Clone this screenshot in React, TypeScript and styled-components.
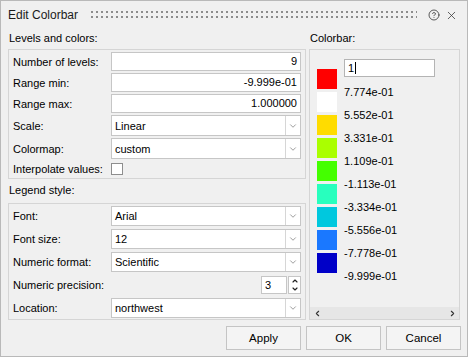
import styled, { createGlobalStyle } from "styled-components";
import { ChevronDown, ChevronLeft, ChevronRight, ChevronUp, CircleHelp, X } from "lucide-react";

const GlobalStyle = createGlobalStyle`
  body {
    margin: 0;
    background: #f0f0f0;
  }
  * {
    box-sizing: border-box;
  }
`;

const Dialog = styled.div`
  width: 468px;
  height: 357px;
  border: 1px solid #b9b9b9;
  background: #f0f0f0;
  display: flex;
  flex-direction: column;
  font-family: "Liberation Sans", Arial, sans-serif;
  font-size: 11px;
  color: #000;
`;

const TitleBar = styled.div`
  height: 28px;
  display: flex;
  align-items: center;
  padding: 0 9px 0 7px;
`;

const TitleText = styled.div`
  font-size: 12px;
  color: #1a1a1a;
`;

const Grip = styled.div`
  flex: 1;
  height: 10px;
  margin: 2px 11px 0 13px;
  background-image: radial-gradient(circle at 1px 1px, #8c8c8c 0.9px, transparent 1.2px);
  background-size: 5px 5px;
`;

const TitleIcons = styled.div`
  display: flex;
  align-items: center;
  gap: 5px;
  color: #333;
`;

const Body = styled.div`
  display: flex;
  padding: 0 7px 0 7px;
  gap: 3px;
`;

const LeftColumn = styled.div`
  width: 298px;
  display: flex;
  flex-direction: column;
`;

const RightColumn = styled.div`
  flex: 1;
  display: flex;
  flex-direction: column;
`;

const SectionLabel = styled.div<{ $h: number }>`
  height: ${(p) => p.$h}px;
  line-height: ${(p) => p.$h - 2}px;
  padding-left: 1px;
`;

const Group = styled.div<{ $gap: number; $pt: number }>`
  border: 1px solid #d5d5d5;
  padding: ${(p) => p.$pt}px 4px 1px 4px;
  display: flex;
  flex-direction: column;
  gap: ${(p) => p.$gap}px;
`;

const Row = styled.div<{ $h: number }>`
  display: grid;
  grid-template-columns: 98px 1fr;
  align-items: center;
  height: ${(p) => p.$h}px;
`;

const TextField = styled.div`
  height: 19px;
  border: 1px solid #c6c6c6;
  background: #fff;
  text-align: right;
  padding-right: 3px;
  line-height: 17px;
`;

const Combo = styled.div<{ $h: number }>`
  height: ${(p) => p.$h}px;
  display: flex;
  border: 1px solid #c6c6c6;
  background: #fff;
`;

const ComboText = styled.div`
  flex: 1;
  padding-left: 3px;
  display: flex;
  align-items: center;
`;

const ComboArrow = styled.div`
  width: 15px;
  border-left: 1px solid #d6d6d6;
  display: flex;
  align-items: center;
  justify-content: center;
  color: #8a8a8a;
`;

const Checkbox = styled.div`
  width: 12px;
  height: 12px;
  border: 1px solid #8e8e8e;
  background: #fff;
`;

const SpinWrap = styled.div`
  display: flex;
  justify-content: flex-end;
  height: 18px;
`;

const SpinField = styled.div`
  width: 26px;
  border: 1px solid #c6c6c6;
  background: #fff;
  padding-left: 3px;
  line-height: 16px;
`;

const SpinButtons = styled.div`
  width: 13px;
  margin-left: 1px;
  border: 1px solid #c6c6c6;
  background: #fff;
  display: flex;
  flex-direction: column;
  align-items: center;
  justify-content: center;
  color: #222;
  line-height: 0;
`;

const Panel = styled.div`
  flex: 1;
  border: 1px solid #d5d5d5;
  display: flex;
  flex-direction: column;
`;

const PanelContent = styled.div`
  flex: 1;
  display: flex;
  padding-left: 7px;
`;

const Swatches = styled.div`
  margin-top: 19px;
  display: flex;
  flex-direction: column;
  gap: 3px;
`;

const Swatch = styled.div<{ $color: string }>`
  width: 20px;
  height: 20px;
  background: ${(p) => p.$color};
`;

const Values = styled.div`
  margin-top: 9px;
  margin-left: 7px;
  display: flex;
  flex-direction: column;
`;

const ValueInput = styled.div`
  width: 91px;
  height: 18px;
  border: 1px solid #b4b4b4;
  background: #fff;
  padding-left: 3px;
  display: flex;
  align-items: center;
  margin-bottom: 4px;
`;

const Caret = styled.span`
  display: inline-block;
  width: 1px;
  height: 12px;
  background: #000;
  margin-left: 1px;
`;

const ValueLabel = styled.div`
  height: 23px;
  line-height: 23px;
`;

const ScrollBar = styled.div`
  height: 12px;
  background: #e6e6e6;
  display: flex;
  justify-content: space-between;
  align-items: center;
  padding: 0 2px 0 3px;
  color: #333;
`;

const Footer = styled.div`
  display: flex;
  justify-content: flex-end;
  gap: 5px;
  padding: 6px 6px 0 0;
`;

const Button = styled.button`
  width: 75px;
  height: 24px;
  border: 1px solid #c4c4c4;
  background: #f4f4f4;
  font-family: "Liberation Sans", Arial, sans-serif;
  font-size: 11.5px;
  color: #000;
  padding: 0;
`;

const colors = ["#ff0000", "#ffffff", "#ffdc00", "#aaff00", "#44ff00", "#28ffbe", "#00c8de", "#1a78ff", "#0000c8"];
const values = ["7.774e-01", "5.552e-01", "3.331e-01", "1.109e-01", "-1.113e-01", "-3.334e-01", "-5.556e-01", "-7.778e-01", "-9.999e-01"];

const Select = ({ value, h = 20 }: { value: string; h?: number }) => (
  <Combo $h={h}>
    <ComboText>{value}</ComboText>
    <ComboArrow>
      <ChevronDown size={10} strokeWidth={2} />
    </ComboArrow>
  </Combo>
);

const App = () => {
  return (
    <>
      <GlobalStyle />
      <Dialog>
        <TitleBar>
          <TitleText>Edit Colorbar</TitleText>
          <Grip />
          <TitleIcons>
            <CircleHelp size={12} strokeWidth={1.6} />
            <X size={13} strokeWidth={1.4} />
          </TitleIcons>
        </TitleBar>
        <Body>
          <LeftColumn>
            <SectionLabel $h={20}>Levels and colors:</SectionLabel>
            <Group $gap={2} $pt={2}>
              <Row $h={19}>
                <span>Number of levels:</span>
                <TextField>9</TextField>
              </Row>
              <Row $h={19}>
                <span>Range min:</span>
                <TextField>-9.999e-01</TextField>
              </Row>
              <Row $h={19}>
                <span>Range max:</span>
                <TextField>1.000000</TextField>
              </Row>
              <Row $h={21}>
                <span>Scale:</span>
                <Select value="Linear" h={21} />
              </Row>
              <Row $h={21}>
                <span>Colormap:</span>
                <Select value="custom" h={21} />
              </Row>
              <Row $h={16}>
                <span>Interpolate values:</span>
                <Checkbox />
              </Row>
            </Group>
            <SectionLabel $h={24}>Legend style:</SectionLabel>
            <Group $gap={3} $pt={2}>
              <Row $h={20}>
                <span>Font:</span>
                <Select value="Arial" />
              </Row>
              <Row $h={20}>
                <span>Font size:</span>
                <Select value="12" />
              </Row>
              <Row $h={20}>
                <span>Numeric format:</span>
                <Select value="Scientific" />
              </Row>
              <Row $h={20}>
                <span>Numeric precision:</span>
                <SpinWrap>
                  <SpinField>3</SpinField>
                  <SpinButtons>
                    <ChevronUp size={8} strokeWidth={3.5} />
                    <ChevronDown size={8} strokeWidth={3.5} />
                  </SpinButtons>
                </SpinWrap>
              </Row>
              <Row $h={20}>
                <span>Location:</span>
                <Select value="northwest" />
              </Row>
            </Group>
          </LeftColumn>
          <RightColumn>
            <SectionLabel $h={20}>Colorbar:</SectionLabel>
            <Panel>
              <PanelContent>
                <Swatches>
                  {colors.map((c) => (
                    <Swatch key={c} $color={c} />
                  ))}
                </Swatches>
                <Values>
                  <ValueInput>
                    1<Caret />
                  </ValueInput>
                  {values.map((v) => (
                    <ValueLabel key={v}>{v}</ValueLabel>
                  ))}
                </Values>
              </PanelContent>
              <ScrollBar>
                <ChevronLeft size={9} strokeWidth={3} />
                <ChevronRight size={9} strokeWidth={3} />
              </ScrollBar>
            </Panel>
          </RightColumn>
        </Body>
        <Footer>
          <Button>Apply</Button>
          <Button>OK</Button>
          <Button>Cancel</Button>
        </Footer>
      </Dialog>
    </>
  );
};

export default App;
